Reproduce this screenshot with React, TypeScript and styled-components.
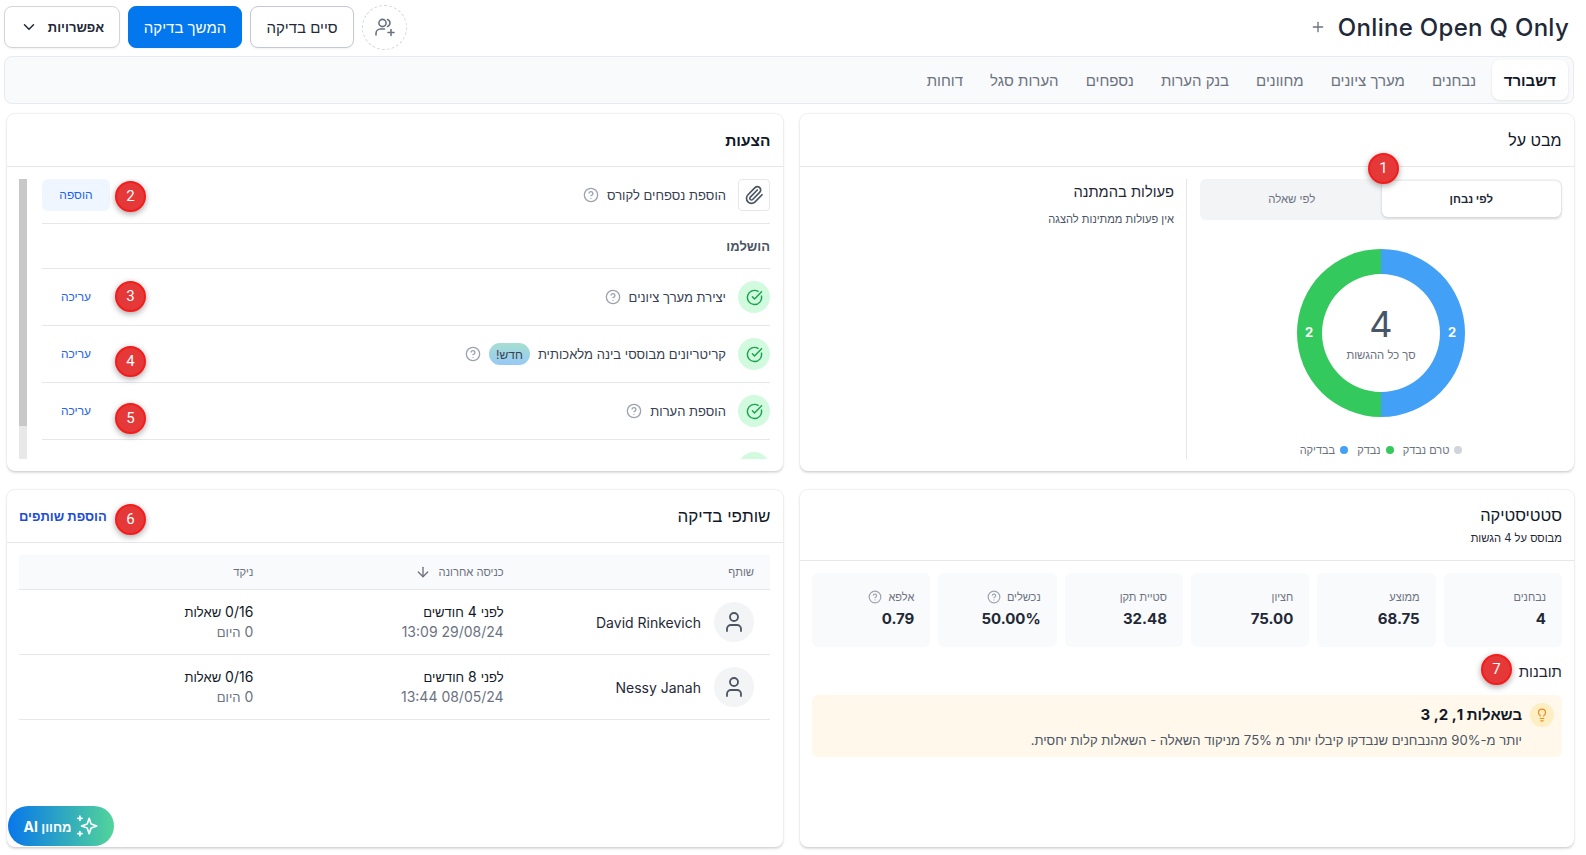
import React from "react";
import styled, { createGlobalStyle } from "styled-components";
import { ArrowDown, ChevronDown, CircleCheckBig, CircleHelp, Lightbulb, Paperclip, Plus, User } from "lucide-react";

const Global = createGlobalStyle`
  html, body { margin: 0; padding: 0; background: #fff; }
  body { font-family: Inter, "Liberation Sans", sans-serif; color: #1f2937; overflow: hidden; }
  * { box-sizing: border-box; }
`;

const Page = styled.div`
  direction: rtl;
  width: 1586px;
  height: 855px;
  position: relative;
  padding: 4px 12px 0 4px;
`;
const TopBar = styled.header`
  display: flex;
  justify-content: space-between;
  align-items: center;
  height: 46px;
`;
const TitleWrap = styled.div`
  display: flex;
  align-items: center;
  gap: 12px;
  padding-right: 5px;
  color: #6b7280;
`;
const Title = styled.h1`
  margin: 0;
  direction: ltr;
  font-size: 24px;
  font-weight: 500;
  color: #1f2937;
  letter-spacing: 0.3px;
`;
const Actions = styled.div`
  display: flex;
  align-items: center;
  gap: 8px;
`;
const AddCircle = styled.div`
  width: 45px;
  height: 45px;
  border-radius: 50%;
  border: 1px dashed #d1d5db;
  display: flex;
  align-items: center;
  justify-content: center;
  color: #6b7280;
`;
const Button = styled.button<{ $kind: "outline" | "primary" | "menu" }>`
  height: 42px;
  font-family: inherit;
  font-size: ${(p) => (p.$kind === "menu" ? 13 : 15)}px;
  font-weight: ${(p) => (p.$kind === "menu" ? 700 : 400)};
  border-radius: 8px;
  display: flex;
  align-items: center;
  justify-content: center;
  gap: 10px;
  color: ${(p) => (p.$kind === "primary" ? "#fff" : "#1f2937")};
  background: ${(p) => (p.$kind === "primary" ? "#0277ee" : "#fff")};
  border: 1px solid ${(p) => (p.$kind === "primary" ? "#0277ee" : p.$kind === "outline" ? "#c5c8d8" : "#d1d5db")};
  box-shadow: 0 1px 2px rgba(0, 0, 0, 0.05);
  width: ${(p) => (p.$kind === "primary" ? 114 : p.$kind === "outline" ? 104 : 116)}px;
`;
const Tabs = styled.nav`
  margin-top: 6px;
  height: 48px;
  display: flex;
  align-items: center;
  padding: 0 5px;
  background: #f9fafb;
  border: 1px solid #e8eaef;
  border-radius: 8px;
`;
const Tab = styled.div<{ $active?: boolean }>`
  height: 40px;
  display: flex;
  align-items: center;
  padding: 0 ${(p) => (p.$active ? 12 : 13.5)}px;
  margin-left: ${(p) => (p.$active ? 2 : 0)}px;
  font-size: 15px;
  font-weight: ${(p) => (p.$active ? 700 : 400)};
  color: ${(p) => (p.$active ? "#111827" : "#6b7280")};
  background: ${(p) => (p.$active ? "#fff" : "transparent")};
  border-radius: 8px;
  box-shadow: ${(p) => (p.$active ? "0 1px 3px rgba(0,0,0,.1)" : "none")};
`;
const Grid = styled.main`
  margin: 9px 0 0 3px;
  display: grid;
  grid-template-columns: 774px 776px;
  grid-template-rows: 358px 358px;
  column-gap: 17px;
  row-gap: 18px;
`;
const Card = styled.section`
  background: #fff;
  border-radius: 8px;
  border-top: 1px solid #f0f1f4;
  box-shadow: 0 1px 2px rgba(17, 24, 39, 0.12), 0 2px 3px rgba(17, 24, 39, 0.1);
  display: flex;
  flex-direction: column;
  min-height: 0;
  position: relative;
`;
const CardHeader = styled.div`
  height: 53px;
  flex: none;
  display: flex;
  align-items: center;
  justify-content: space-between;
  padding: 0 12.5px 0 12px;
  border-bottom: 1px solid #e5e7eb;
  position: relative;
`;
const CardTitle = styled.h2<{ $size: number; $bold?: boolean }>`
  margin: 0;
  font-size: ${(p) => p.$size}px;
  font-weight: ${(p) => (p.$bold ? 700 : 400)};
  color: #111827;
`;
const StatsHeader = styled.div`
  height: 71px;
  flex: none;
  padding: 15px 12px 0;
  border-bottom: 1px solid #e5e7eb;
`;
const SubTitle = styled.div`
  font-size: 11.2px;
  color: #1f2937;
  margin-top: 6px;
`;
const Overview = styled.div`
  display: flex;
  height: 304px;
  padding: 12px 0;
`;
const ChartCol = styled.div`
  width: 388px;
  flex: none;
  padding: 0 12px 0 13px;
  border-left: 1px solid #e5e7eb;
  display: flex;
  flex-direction: column;
  align-items: center;
`;
const Segmented = styled.div`
  width: 100%;
  height: 41px;
  flex: none;
  background: #f3f4f6;
  border-radius: 6px;
  padding: 2px 1px 3px 2px;
  display: grid;
  grid-template-columns: 1fr 1fr;
  position: relative;
`;
const Segment = styled.div<{ $active?: boolean }>`
  display: flex;
  align-items: center;
  justify-content: center;
  font-size: 11.4px;
  font-weight: ${(p) => (p.$active ? 700 : 400)};
  color: ${(p) => (p.$active ? "#1f2937" : "#6b7280")};
  background: ${(p) => (p.$active ? "#fff" : "transparent")};
  border-radius: 6px;
  box-shadow: ${(p) => (p.$active ? "0 1px 3px rgba(0,0,0,.18)" : "none")};
`;
const Donut = styled.svg`
  margin-top: 29px;
  flex: none;
  display: block;
`;
const Legend = styled.div`
  margin-top: 26px;
  display: flex;
  gap: 9px;
  font-size: 11px;
  line-height: 14px;
  color: #6b7280;
`;
const LegendItem = styled.div`
  display: flex;
  align-items: center;
  gap: 5px;
`;
const Dot = styled.span<{ $color: string }>`
  width: 8px;
  height: 8px;
  border-radius: 50%;
  background: ${(p) => p.$color};
`;
const Pending = styled.div`
  padding: 3px 12px 0;
  flex: 1;
`;
const PendingTitle = styled.div`
  font-size: 14.7px;
  line-height: 20px;
  color: #1f2937;
`;
const PendingText = styled.div`
  margin-top: 10px;
  font-size: 11.1px;
  line-height: 15px;
  color: #4b5563;
`;
const SuggestBody = styled.div`
  height: 304px;
  padding: 12px 13px 12px 12px;
  display: flex;
  gap: 15px;
`;
const List = styled.div`
  flex: 1;
  height: 280px;
  overflow: hidden;
`;
const Track = styled.div`
  width: 8px;
  height: 280px;
  flex: none;
  background: #e8e8e8;
`;
const Thumb = styled.div`
  height: 247px;
  background: #c8c8c8;
`;
const Row = styled.div<{ $first?: boolean }>`
  display: flex;
  align-items: center;
  gap: 12px;
  padding: ${(p) => (p.$first ? "0 0 12px" : "12px 0")};
  border-bottom: 1px solid #e5e7eb;
  position: relative;
`;
const IconBox = styled.div`
  width: 32px;
  height: 32px;
  flex: none;
  border: 1px solid #e5e7eb;
  border-radius: 4px;
  display: flex;
  align-items: center;
  justify-content: center;
  color: #4b5563;
`;
const CheckCircle = styled.div`
  width: 32px;
  height: 32px;
  flex: none;
  border-radius: 50%;
  background: #d1fadf;
  color: #16a34a;
  display: flex;
  align-items: center;
  justify-content: center;
`;
const RowText = styled.div`
  font-size: 13px;
  color: #374151;
  white-space: nowrap;
`;
const Inline = styled.div`
  flex: 1;
  display: flex;
  align-items: center;
  gap: 8px;
  color: #9ca3af;
`;
const NewTag = styled.span`
  width: 41px;
  height: 22px;
  border-radius: 11px;
  background: linear-gradient(180deg, #a6dfd0, #98c8f6);
  color: #374151;
  font-size: 12px;
  display: flex;
  align-items: center;
  justify-content: center;
`;
const Action = styled.div<{ $fill?: boolean }>`
  width: 68px;
  height: 32px;
  flex: none;
  border-radius: 6px;
  background: ${(p) => (p.$fill ? "#eff6ff" : "transparent")};
  color: #2563eb;
  font-size: 12px;
  display: flex;
  align-items: center;
  justify-content: center;
  padding-bottom: 2px;
`;
const Section = styled.div`
  height: 45px;
  display: flex;
  align-items: center;
  font-size: 13px;
  font-weight: 700;
  color: #4b5563;
  border-bottom: 1px solid #e5e7eb;
`;
const Marker = styled.span<{ $x: number; $y: number }>`
  position: absolute;
  left: ${(p) => p.$x}px;
  top: ${(p) => p.$y}px;
  width: 31px;
  height: 31px;
  border-radius: 50%;
  background: #e53838;
  border: 2px solid #f51c1c;
  box-shadow: 0 2px 6px rgba(0, 0, 0, 0.35);
  color: #fff;
  font-family: Roboto, sans-serif;
  font-size: 15px;
  display: flex;
  align-items: center;
  justify-content: center;
  padding-bottom: 2px;
  z-index: 2;
`;
const AddLink = styled.div`
  font-size: 13px;
  font-weight: 700;
  color: #1d4ed8;
`;
const TableWrap = styled.div`
  padding: 12px 13px 0 12px;
`;
const TableRow = styled.div<{ $head?: boolean }>`
  display: grid;
  grid-template-columns: repeat(3, 1fr);
  align-items: center;
  height: ${(p) => (p.$head ? 35 : 65)}px;
  background: ${(p) => (p.$head ? "#f9fafb" : "#fff")};
  border-bottom: 1px solid #e5e7eb;
`;
const Cell = styled.div<{ $head?: boolean }>`
  padding: 0 16px;
  display: flex;
  align-items: center;
  gap: 8px;
  font-size: ${(p) => (p.$head ? 11.2 : 14)}px;
  color: ${(p) => (p.$head ? "#6b7280" : "#1f2937")};
`;
const Avatar = styled.div`
  width: 40px;
  height: 40px;
  border-radius: 50%;
  background: #f3f4f6;
  color: #4b5563;
  display: flex;
  align-items: center;
  justify-content: center;
  margin-left: 5px;
`;
const Stack = styled.div`
  font-size: 14px;
  line-height: 20px;
  color: #111827;
`;
const Heb = styled.span`
  font-size: 13px;
`;
const Muted = styled.div`
  color: #6b7280;
`;
const Name = styled.span`
  direction: ltr;
`;
const StatGrid = styled.div`
  display: grid;
  grid-template-columns: repeat(6, 1fr);
  gap: 8px;
  padding: 12px 12px 0;
`;
const Stat = styled.div`
  height: 74px;
  background: #f9fafb;
  border-radius: 6px;
  padding: 15px 16px 0;
`;
const StatLabel = styled.div`
  display: flex;
  align-items: center;
  gap: 6px;
  height: 18px;
  font-size: 11px;
  color: #6b7280;
`;
const StatValue = styled.div`
  margin-top: 1px;
  font-size: 15px;
  line-height: 24px;
  font-weight: 700;
  color: #1f2937;
`;
const Insights = styled.div`
  margin: 14px 12px 12px;
  font-size: 15px;
  line-height: 22px;
  color: #1f2937;
  position: relative;
`;
const Alert = styled.div`
  margin: 0 12px;
  height: 62px;
  background: #fff8eb;
  border-radius: 6px;
  padding: 8px;
  display: flex;
  gap: 8px;
`;
const Bulb = styled.div`
  width: 24px;
  height: 24px;
  flex: none;
  border-radius: 50%;
  background: #fdeec4;
  color: #f08c1a;
  display: flex;
  align-items: center;
  justify-content: center;
`;
const AlertTitle = styled.div`
  font-size: 15px;
  line-height: 24px;
  font-weight: 700;
  color: #111827;
`;
const AlertText = styled.div`
  margin-top: 3px;
  font-size: 13.08px;
  line-height: 20px;
  color: #4b5563;
`;
const AiButton = styled.div`
  position: absolute;
  left: 8px;
  top: 806px;
  width: 106px;
  height: 40px;
  border-radius: 20px;
  background: linear-gradient(270deg, #52d49a, #0877ea);
  color: #fff;
  font-size: 14px;
  font-weight: 700;
  display: flex;
  align-items: center;
  justify-content: center;
  gap: 3px;
  z-index: 3;
`;

const Help = () => <CircleHelp size={16} strokeWidth={2} color="#9ca3af" />;
const Check = () => (
  <CheckCircle>
    <CircleCheckBig size={17} strokeWidth={2} />
  </CheckCircle>
);
const UserAddIcon = () => (
  <svg width="22" height="22" viewBox="0 0 22 22" fill="none" stroke="currentColor" strokeWidth="1.6" strokeLinecap="round">
    <circle cx="8.5" cy="7" r="3.6" />
    <path d="M13.5 3.6a3.6 3.6 0 0 1 0 6.8" />
    <path d="M2 19v-1.5c0-2.6 2-4.5 4.5-4.5h4" />
    <path d="M17 13.5v6M14 16.5h6" />
  </svg>
);
const SparkIcon = () => (
  <svg width="24" height="24" viewBox="0 0 22 22" fill="none" stroke="currentColor" strokeWidth="1.5" strokeLinecap="round" strokeLinejoin="round">
    <path d="M13 4l1.8 5.2 5.2 1.8-5.2 1.8L13 18l-1.8-5.2L6 11l5.2-1.8z" />
    <path d="M4.5 2v4M2.5 4h4M4.5 16v4M2.5 18h4" />
  </svg>
);

const tabs = ["נבחנים", "מערך ציונים", "מחוונים", "בנק הערות", "נספחים", "הערות סגל", "דוחות"];
const stats: { label: string; value: string; help?: boolean }[] = [
  { label: "נבחנים", value: "4" },
  { label: "ממוצע", value: "68.75" },
  { label: "חציון", value: "75.00" },
  { label: "סטיית תקן", value: "32.48" },
  { label: "נכשלים", value: "50.00%", help: true },
  { label: "אלפא", value: "0.79", help: true },
];
const people = [
  { name: "David Rinkevich", months: "4", date: "29/08/24 13:09" },
  { name: "Nessy Janah", months: "8", date: "08/05/24 13:44" },
];

export default function App() {
  return (
    <Page>
      <Global />
      <TopBar>
        <TitleWrap>
          <Title>Online Open Q Only</Title>
          <Plus size={16} />
        </TitleWrap>
        <Actions>
          <AddCircle>
            <UserAddIcon />
          </AddCircle>
          <Button $kind="outline">סיים בדיקה</Button>
          <Button $kind="primary">המשך בדיקה</Button>
          <Button $kind="menu">
            אפשרויות
            <ChevronDown size={18} />
          </Button>
        </Actions>
      </TopBar>
      <Tabs>
        <Tab $active>דשבורד</Tab>
        {tabs.map((t) => (
          <Tab key={t}>{t}</Tab>
        ))}
      </Tabs>
      <Grid>
        <Card>
          <CardHeader>
            <CardTitle $size={16}>מבט על</CardTitle>
          </CardHeader>
          <Overview>
            <ChartCol>
              <Segmented>
                <Segment $active>לפי נבחן</Segment>
                <Segment>לפי שאלה</Segment>
                <Marker $x={168} $y={-26}>1</Marker>
              </Segmented>
              <Donut width="168" height="168" viewBox="0 0 168 168">
                <path d="M84 0a84 84 0 0 1 0 168v-25a59 59 0 0 0 0-118z" fill="#42a0f6" />
                <path d="M84 0a84 84 0 0 0 0 168v-25a59 59 0 0 1 0-118z" fill="#34c95c" />
                <text x="155" y="88" fontSize="13" fontWeight="700" fill="#fff" textAnchor="middle">2</text>
                <text x="12" y="88" fontSize="13" fontWeight="700" fill="#fff" textAnchor="middle">2</text>
                <text x="84" y="88" fontSize="36" fill="#475569" textAnchor="middle">4</text>
                <text x="84" y="110" fontSize="11.3" fill="#6b7280" textAnchor="middle">סך כל ההגשות</text>
              </Donut>
              <Legend>
                <LegendItem><Dot $color="#d1d5db" />טרם נבדק</LegendItem>
                <LegendItem><Dot $color="#34c95c" />נבדק</LegendItem>
                <LegendItem><Dot $color="#42a0f6" />בבדיקה</LegendItem>
              </Legend>
            </ChartCol>
            <Pending>
              <PendingTitle>פעולות בהמתנה</PendingTitle>
              <PendingText>אין פעולות ממתינות להצגה</PendingText>
            </Pending>
          </Overview>
        </Card>

        <Card>
          <CardHeader>
            <CardTitle $size={15.5} $bold>הצעות</CardTitle>
          </CardHeader>
          <SuggestBody>
            <List>
              <Row $first>
                <IconBox>
                  <Paperclip size={20} strokeWidth={2} />
                </IconBox>
                <Inline>
                  <RowText>הוספת נספחים לקורס</RowText>
                  <Help />
                </Inline>
                <Action $fill>הוספה</Action>
                <Marker $x={73} $y={2}>2</Marker>
              </Row>
              <Section>הושלמו</Section>
              <Row>
                <Check />
                <Inline>
                  <RowText>יצירת מערך ציונים</RowText>
                  <Help />
                </Inline>
                <Action>עריכה</Action>
                <Marker $x={73} $y={12}>3</Marker>
              </Row>
              <Row>
                <Check />
                <Inline>
                  <RowText>קריטריונים מבוססי בינה מלאכותית</RowText>
                  <NewTag>חדש!</NewTag>
                  <Help />
                </Inline>
                <Action>עריכה</Action>
                <Marker $x={73} $y={20}>4</Marker>
              </Row>
              <Row>
                <Check />
                <Inline>
                  <RowText>הוספת הערות</RowText>
                  <Help />
                </Inline>
                <Action>עריכה</Action>
                <Marker $x={73} $y={20}>5</Marker>
              </Row>
              <Row>
                <Check />
              </Row>
            </List>
            <Track>
              <Thumb />
            </Track>
          </SuggestBody>
        </Card>

        <Card>
          <StatsHeader>
            <CardTitle $size={16.4}>סטטיסטיקה</CardTitle>
            <SubTitle>מבוסס על 4 הגשות</SubTitle>
          </StatsHeader>
          <StatGrid>
            {stats.map((s) => (
              <Stat key={s.label}>
                <StatLabel>
                  {s.label}
                  {s.help && <CircleHelp size={14} color="#9ca3af" />}
                </StatLabel>
                <StatValue>{s.value}</StatValue>
              </Stat>
            ))}
          </StatGrid>
          <Insights>
            תובנות
            <Marker $x={669} $y={-7}>7</Marker>
          </Insights>
          <Alert>
            <Bulb>
              <Lightbulb size={14} />
            </Bulb>
            <div>
              <AlertTitle>בשאלות 1, 2, 3</AlertTitle>
              <AlertText>יותר מ-90% מהנבחנים שנבדקו קיבלו יותר מ 75% מניקוד השאלה - השאלות קלות יחסית.</AlertText>
            </div>
          </Alert>
        </Card>

        <Card>
          <CardHeader>
            <CardTitle $size={17}>שותפי בדיקה</CardTitle>
            <AddLink>הוספת שותפים</AddLink>
            <Marker $x={108} $y={14}>6</Marker>
          </CardHeader>
          <TableWrap>
            <TableRow $head>
              <Cell $head>שותף</Cell>
              <Cell $head>
                כניסה אחרונה
                <ArrowDown size={16} />
              </Cell>
              <Cell $head>ניקד</Cell>
            </TableRow>
            {people.map((p) => (
              <TableRow key={p.name}>
                <Cell>
                  <Avatar>
                    <User size={24} strokeWidth={1.8} />
                  </Avatar>
                  <Name>{p.name}</Name>
                </Cell>
                <Cell>
                  <Stack>
                    <Heb>לפני</Heb> {p.months} <Heb>חודשים</Heb>
                    <Muted>{p.date}</Muted>
                  </Stack>
                </Cell>
                <Cell>
                  <Stack>
                    0/16 <Heb>שאלות</Heb>
                    <Muted>0 <Heb>היום</Heb></Muted>
                  </Stack>
                </Cell>
              </TableRow>
            ))}
          </TableWrap>
        </Card>
      </Grid>
      <AiButton>
        <SparkIcon />
        <span><Heb>מחוון</Heb> AI</span>
      </AiButton>
    </Page>
  );
}
